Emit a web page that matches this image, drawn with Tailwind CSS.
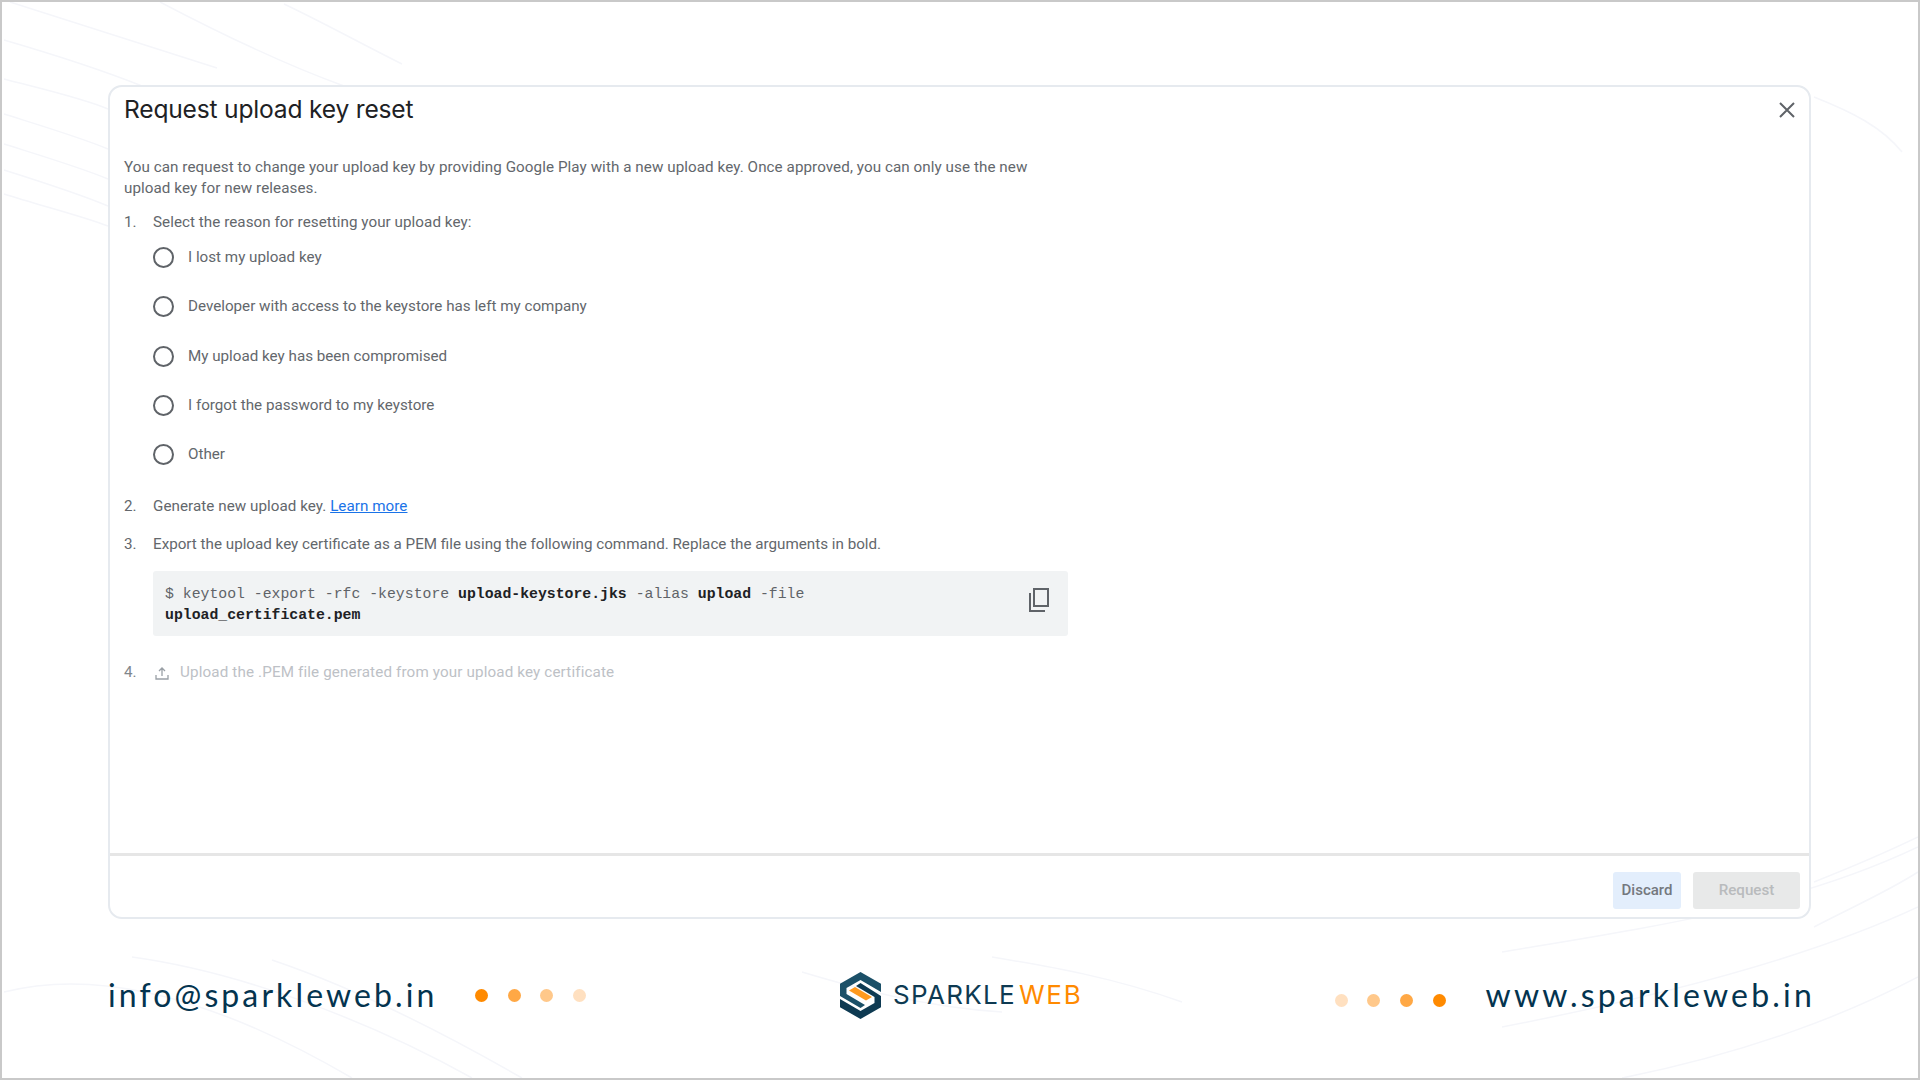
<!DOCTYPE html>
<html lang="en">
<head>
  <meta charset="UTF-8" />
  <title>Request upload key reset</title>
  <script src="https://cdn.jsdelivr.net/npm/@tailwindcss/browser@4"></script>
</head>
<body class="bg-white">
  <div class="relative w-[1920px] h-[1080px] overflow-hidden bg-white border-2 border-[#c9c9c9] font-['Roboto',sans-serif]">
    <!-- faint background curves -->
    <svg class="absolute inset-0" width="1916" height="1076" fill="none" stroke="#f5f6fa" stroke-width="1.5">
      <path d="M8 0C70 20 140 42 215 66" />
      <path d="M158 0C200 22 270 58 342 84" />
      <path d="M282 2C320 20 360 42 400 62" />
      <path d="M2 38C50 52 100 68 140 84" />
      <path d="M2 77C40 87 80 96 106 107" />
      <path d="M2 112C40 124 80 136 106 147" />
      <path d="M2 142C40 154 80 166 106 177" />
      <path d="M2 168C40 180 80 193 106 204" />
      <path d="M2 192C40 204 80 214 106 224" />
      <path d="M1812 95C1850 110 1880 125 1900 150" />
      <path d="M1812 880C1850 865 1885 850 1916 835" />
      <path d="M1812 925C1850 905 1885 890 1916 870" />
      <path d="M1500 950C1650 925 1790 905 1916 845" />
      <path d="M1500 1025C1680 990 1820 950 1916 905" />
      <path d="M1620 1076C1750 1050 1850 1010 1916 975" />
      <path d="M2 990C100 965 220 1000 350 1076" />
      <path d="M130 955C240 970 370 1020 470 1076" />
      <path d="M270 958C350 985 440 1030 520 1076" />
      <path d="M990 955C1050 965 1110 975 1180 1000" />
      <path d="M800 970C850 985 920 1005 1000 1010" />
    </svg>

    <div class="relative flex flex-col pl-[106px] pr-[103px] pt-[83px]">
      <!-- dialog card -->
      <section class="flex flex-col h-[834px] w-[1703px] rounded-[14px] border-2 border-[#e6eaef] bg-white">
        <div class="flex-1 pl-[14px] pr-[12px]">
          <div class="flex items-center justify-between h-[45px]">
            <h1 class="text-[24.6px] leading-[45px] font-normal text-[#202124] font-['Inter',sans-serif] tracking-[-0.2px]">Request upload key reset</h1>
            <svg class="mr-[2px]" width="16" height="16" viewBox="0 0 16 16" fill="none" stroke="#5f6368" stroke-width="2"><path d="M1 1L15 15M15 1L1 15" /></svg>
          </div>

          <div class="mt-[25px] w-[940px] text-[15.2px] leading-[21px] text-[#63676c]">
            <p class="w-[915px] tracking-[0.07px]">You can request to change your upload key by providing Google Play with a new upload key. Once approved, you can only use the new upload key for new releases.</p>

            <div class="mt-[13px] flex h-[21px]">
              <span class="w-[29px]">1.</span>
              <span class="tracking-[0.05px]">Select the reason for resetting your upload key:</span>
            </div>
            <div class="ml-[29px] flex flex-col">
              <label class="flex items-center h-[49.3px]"><span class="w-[21px] h-[21px] rounded-full border-2 border-[#5f6368]"></span><span class="ml-[14px]">I lost my upload key</span></label>
              <label class="flex items-center h-[49.3px]"><span class="w-[21px] h-[21px] rounded-full border-2 border-[#5f6368]"></span><span class="ml-[14px]">Developer with access to the keystore has left my company</span></label>
              <label class="flex items-center h-[49.3px]"><span class="w-[21px] h-[21px] rounded-full border-2 border-[#5f6368]"></span><span class="ml-[14px]">My upload key has been compromised</span></label>
              <label class="flex items-center h-[49.3px]"><span class="w-[21px] h-[21px] rounded-full border-2 border-[#5f6368]"></span><span class="ml-[14px]">I forgot the password to my keystore</span></label>
              <label class="flex items-center h-[49.3px]"><span class="w-[21px] h-[21px] rounded-full border-2 border-[#5f6368]"></span><span class="ml-[14px]">Other</span></label>
            </div>

            <div class="mt-[17px] flex h-[21px]">
              <span class="w-[29px]">2.</span>
              <span class="tracking-[0.05px]">Generate new upload key. <a class="text-[#1a73e8] underline">Learn more</a></span>
            </div>
            <div class="mt-[17px] flex h-[21px]">
              <span class="w-[29px]">3.</span>
              <span>Export the upload key certificate as a PEM file using the following command. Replace the arguments in bold.</span>
            </div>

            <div class="ml-[29px] mt-[16px] flex justify-between w-[915px] h-[65px] rounded-[3px] bg-[#f1f3f4] pl-[12px] pr-[19px] pt-[13px]">
              <code class="block font-['Liberation_Mono',monospace] text-[14.8px] leading-[21px] text-[#5f6368]">$ keytool -export -rfc -keystore <b class="text-[#202124]">upload-keystore.jks</b> -alias <b class="text-[#202124]">upload</b> -file<br /><b class="text-[#202124]">upload_certificate.pem</b></code>
              <svg class="mt-[4px]" width="20" height="24" viewBox="0 0 20 24" fill="none" stroke="#5f6368" stroke-width="2"><path d="M5 1H19V18H5Z" /><path d="M1 5V23H16" /></svg>
            </div>

            <div class="mt-[26px] flex h-[21px] items-center text-[#bdc1c6]">
              <span class="w-[29px] text-[#80868b]">4.</span>
              <svg class="ml-[2px]" width="14" height="14" viewBox="0 0 14 14" fill="none" stroke="#9aa0a6" stroke-width="1.3"><path d="M7 10V2M4 5L7 2L10 5M1 9V13H13V9" /></svg>
              <span class="ml-[11px] tracking-[0.14px]">Upload the .PEM file generated from your upload key certificate</span>
            </div>
          </div>
        </div>

        <div class="flex h-[64px] items-start justify-end gap-[12px] border-t-[3px] border-[#e6e6e6] pr-[9px] pt-[16px]">
          <button class="w-[68px] h-[37px] rounded-[3px] bg-[#e3eefc] text-[15px] font-medium text-[#74787e]">Discard</button>
          <button class="w-[107px] h-[37px] rounded-[3px] bg-[#e8e9e9] text-[15.2px] font-medium text-[#b9bbbd]">Request</button>
        </div>
      </section>

      <!-- contact footer -->
      <footer class="relative mt-[52px] h-[48px] font-['Lato',sans-serif] text-[#04344f]">
        <div class="flex items-center justify-between h-[48px]">
          <div class="flex items-center">
            <span class="w-[367px] text-[32px] leading-[48px] tracking-[3.1px]">info@sparkleweb.in</span>
            <span class="flex gap-[19.6px]">
              <i class="w-[13px] h-[13px] rounded-full bg-[#ff8a00]"></i>
              <i class="w-[13px] h-[13px] rounded-full bg-[#ffa845]"></i>
              <i class="w-[13px] h-[13px] rounded-full bg-[#ffc88a]"></i>
              <i class="w-[13px] h-[13px] rounded-full bg-[#ffe0c0]"></i>
            </span>
          </div>

          <div class="flex items-center">
            <span class="flex gap-[19.6px] mt-[10px] mr-[40px]">
              <i class="w-[13px] h-[13px] rounded-full bg-[#ffe0c0]"></i>
              <i class="w-[13px] h-[13px] rounded-full bg-[#ffc88a]"></i>
              <i class="w-[13px] h-[13px] rounded-full bg-[#ffa845]"></i>
              <i class="w-[13px] h-[13px] rounded-full bg-[#ff8a00]"></i>
            </span>
            <span class="text-[32px] leading-[48px] tracking-[3.2px]">www.sparkleweb.in</span>
          </div>
        </div>

        <div class="absolute left-[732px] top-0 flex items-center h-[48px]">
          <svg width="41" height="47" viewBox="0 0 41 47">
            <path fill="#1b5068" d="M20.5 0L41 11.8V20L20.5 8L6.5 16V22L25 33L20.5 36L0 24V11.8Z" />
            <path fill="#0e3a52" d="M41 24V35.2L20.5 47L0 35.2V27L20.5 39L34.5 31V25L16 14L20.5 11Z" />
            <path fill="#ff9a1f" d="M9 18.5L15 15L32 25L26 28.5Z" />
          </svg>
          <span class="ml-[12px] text-[26px] leading-[48px] tracking-[1.3px] font-['Inter',sans-serif] font-normal text-[#0e3a52]">SPARKLE</span>
          <span class="ml-[3px] text-[26px] leading-[48px] tracking-[1.8px] font-['Inter',sans-serif] font-normal text-[#ff8a00]">WEB</span>
        </div>
      </footer>
    </div>
  </div>
</body>
</html>
